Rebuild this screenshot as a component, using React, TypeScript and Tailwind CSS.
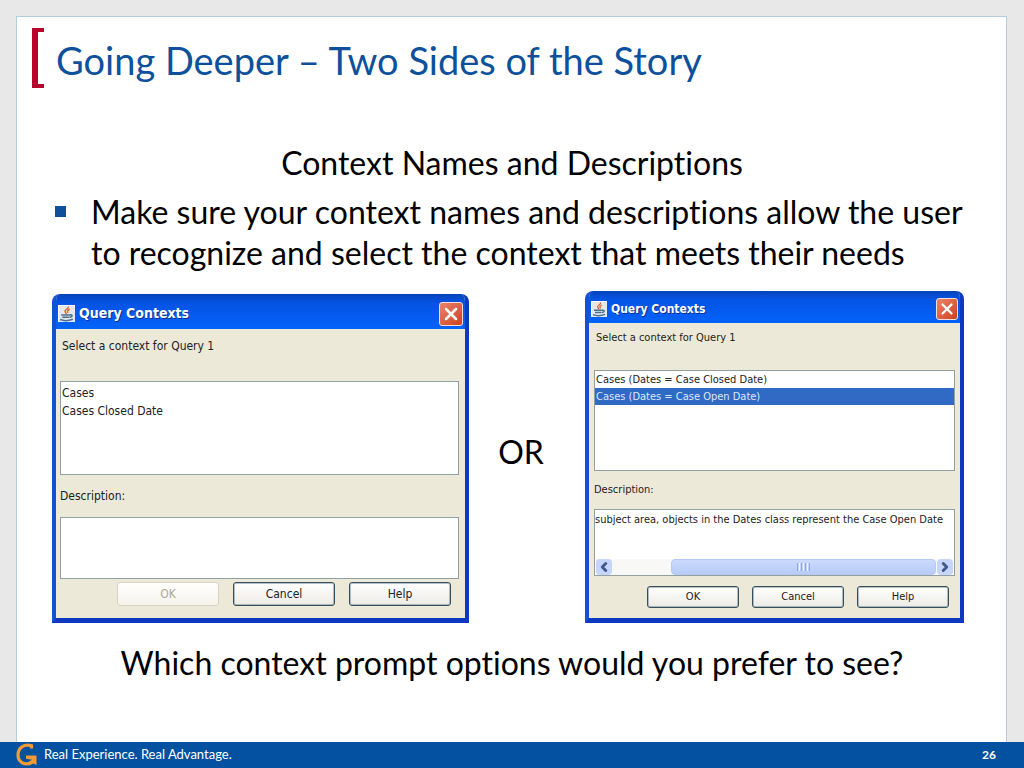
import { ChevronLeft, ChevronRight, X } from 'lucide-react';

interface ContextDialogProps {
  id: string;
  large?: boolean;
  options: string[];
  selected?: string;
  description: string;
}

function JavaIcon({ size }: { size: number }) {
  return (
    <svg width={size} height={size} viewBox="0 0 16 16" aria-hidden="true">
      <rect width="16" height="16" fill="#e4e8ea" />
      <path d="M.5 16V.5H16" fill="none" stroke="#fff" strokeWidth="1" />
      <path d="M9.500 1.500c1.200 2-4 3-2.800 4.800.4.900 1.200 1.300 1 2.200M11 4C8.800 5 8.500 6 9.500 7.500" fill="none" stroke="#d9622b" strokeWidth="1.300" />
      <path d="M3 9.300h8c3-.8 3 2-.3 2.200M4 11.500h6.200M2 13.700c3 1.200 8 1.200 12-.3" fill="none" stroke="#49708f" strokeWidth="1.400" />
    </svg>
  );
}

function ScrollBar() {
  return (
    <div className="flex h-4 items-stretch gap-px bg-[#f8f8f6] px-px">
      <button aria-label="Scroll left" className="flex w-4 items-center justify-center rounded-sm bg-[#c6d5fb] text-[#41598c]">
        <ChevronLeft size={14} strokeWidth={5} />
      </button>
      <div className="flex flex-1 justify-end">
        <div className="flex w-[82%] items-center justify-center gap-px rounded-sm border border-[#b5c9f5] bg-linear-to-b from-[#cbdafd] to-[#b7cbf8]">
          <span className="h-2 w-px bg-[#8fa8de]" />
          <span className="h-2 w-px bg-[#eef3ff]" />
          <span className="h-2 w-px bg-[#8fa8de]" />
          <span className="h-2 w-px bg-[#eef3ff]" />
          <span className="h-2 w-px bg-[#8fa8de]" />
          <span className="h-2 w-px bg-[#eef3ff]" />
          <span className="h-2 w-px bg-[#8fa8de]" />
        </div>
      </div>
      <button aria-label="Scroll right" className="flex w-4 items-center justify-center rounded-sm bg-[#c6d5fb] text-[#41598c]">
        <ChevronRight size={14} strokeWidth={5} />
      </button>
    </div>
  );
}

function ContextDialog({ id, large, options, selected, description }: ContextDialogProps) {
  const button = `rounded-[3px] border bg-linear-to-b from-white to-[#ecebe5] ${
    large ? 'h-6 w-[102px]' : 'h-[22px] w-[92px]'
  }`;
  const enabled = 'border-[#34505f] ring-1 ring-[#34505f]/35 ring-inset';

  return (
    <section
      aria-labelledby={`${id}-title`}
      className={`overflow-hidden rounded-t-lg border-x-4 border-b-[5px] border-[#0b3ac0] border-l-[#1450d2] bg-[#ece9d8] font-['DejaVu_Sans_Condensed','DejaVu_Sans',sans-serif] text-[#222] ${
        large ? 'text-[12px]' : 'text-[11px]'
      }`}
    >
      <header
        className={`-mx-1 flex items-center justify-between bg-linear-to-b from-[#0844b8] via-[#0553e4] via-25% to-[#0463fb] px-1.5 pt-1 text-white ${
          large ? 'h-[35px]' : 'h-8'
        }`}
      >
        <div className="flex items-center gap-1">
          <JavaIcon size={large ? 17 : 16} />
          <h2 id={`${id}-title`} className={`font-bold [text-shadow:1px_1px_0_#0a2f90] ${large ? 'text-[14px]' : 'text-[12px]'}`}>
            Query Contexts
          </h2>
        </div>
        <button
          aria-label="Close"
          className={`flex items-center justify-center rounded-[3px] border border-[#f3ddd8] bg-linear-to-br from-[#e8836a] to-[#cf3f18] ${
            large ? 'size-6' : 'size-[22px]'
          }`}
        >
          <X size={large ? 20 : 18} strokeWidth={3} />
        </button>
      </header>

      <div className={large ? 'pt-2 pr-1.5 pl-1' : 'px-[5px] pt-1.5'}>
        <p className="px-0.5 leading-[18px]">Select a context for Query 1</p>
        <ul
          role="listbox"
          aria-label="Contexts"
          className={`border border-[#93a0a0] bg-white ${large ? 'mt-[26px] h-[94px] pt-0.5' : 'mt-[23px] h-[101px]'}`}
        >
          {options.map((option) => (
            <li
              key={option}
              role="option"
              aria-selected={option === selected}
              className={`px-px ${large ? 'leading-[18px]' : 'leading-[17px]'} ${
                option === selected ? 'bg-[#316ac5] text-[#dbe7fa]' : ''
              }`}
            >
              {option}
            </li>
          ))}
        </ul>

        <label htmlFor={`${id}-description`} className={`block leading-[18px] ${large ? 'mt-3' : 'mt-2.5'}`}>
          Description:
        </label>
        <div className={`flex flex-col border border-[#93a0a0] bg-white ${large ? 'mt-3 h-[62px]' : 'mt-2.5 h-[67px]'}`}>
          <textarea
            id={`${id}-description`}
            readOnly
            value={description}
            className="block w-full flex-1 resize-none overflow-hidden whitespace-nowrap pt-px leading-[18px] outline-none"
          />
          {description && <ScrollBar />}
        </div>

        <div className={`flex justify-end ${large ? 'gap-3.5 pt-[3px] pr-2 pb-3' : 'gap-[13px] pt-2.5 pr-1.5 pb-2.5'}`}>
          <button disabled={!selected} className={`${button} ${selected ? enabled : 'border-[#d6d2c2] from-[#f5f3ea] to-[#f5f3ea] text-[#aaa897]'}`}>
            OK
          </button>
          <button className={`${button} ${enabled}`}>Cancel</button>
          <button className={`${button} ${enabled}`}>Help</button>
        </div>
      </div>
    </section>
  );
}

export default function App() {
  return (
    <div className="flex min-h-screen flex-col bg-[#e8e8e8] font-['Lato','Open_Sans',sans-serif] text-black [font-variant-ligatures:none]">
      <main className="mt-4 mr-[17px] ml-4 flex-1 border-x border-t border-[#b4cddd] bg-white">
        <header className="flex items-center gap-3 px-[15px] pt-[11px]">
          <div className="h-[60px] w-3 border-y-4 border-l-[6px] border-[#b9042c]" />
          <h1 className="pt-1 text-[38px] leading-[48px] text-[#0d509b]">Going Deeper – Two Sides of the Story</h1>
        </header>

        <div className="pr-[42px] pl-[35px]">
          <p className="mt-[54px] -mr-2 text-center text-[32px] leading-[41px]">Context Names and Descriptions</p>
          <ul className="mt-2">
            <li className="flex gap-[25px] pl-[3px] text-[32px] leading-[41px]">
              <span className="mt-[15px] size-[11px] shrink-0 bg-[#0d509b]" />
              <span className="whitespace-nowrap">
                Make sure your context names and descriptions allow the user
                <br />
                to recognize and select the context that meets their needs
              </span>
            </li>
          </ul>

          <div className="mt-[18px] grid grid-cols-[417fr_116fr_379fr] items-end">
            <ContextDialog id="plain" large options={['Cases', 'Cases Closed Date']} description="" />
            <p className="self-center pr-3 pb-3 text-center text-[32px] leading-[41px]">OR</p>
            <ContextDialog
              id="detailed"
              options={['Cases (Dates = Case Closed Date)', 'Cases (Dates = Case Open Date)']}
              selected="Cases (Dates = Case Open Date)"
              description="subject area, objects in the Dates class represent the Case Open Date"
            />
          </div>

          <p className="mt-[19px] -mr-2 text-center text-[32px] leading-[41px]">Which context prompt options would you prefer to see?</p>
        </div>
      </main>

      <footer className="flex h-[26px] items-center bg-[#0351a0] pr-7 pl-4 text-white">
        <svg width="22" height="24" viewBox="0 0 22 24" aria-hidden="true">
          <path d="M15.500 5.500V2.800C8 .5 2 5 2 12c0 7 6.500 10.500 12.500 8" fill="none" stroke="#f39a35" strokeWidth="3.200" />
          <path d="M10 12.500h10.500V22l-3.300-1.500-4 2-1.800-2.700 4.600-3-6-1z" fill="#f39a35" />
        </svg>
        <p className="ml-1.5 flex-1 text-[13px]">Real Experience. Real Advantage.</p>
        <p className="text-[12px] font-bold">26</p>
      </footer>
    </div>
  );
}
